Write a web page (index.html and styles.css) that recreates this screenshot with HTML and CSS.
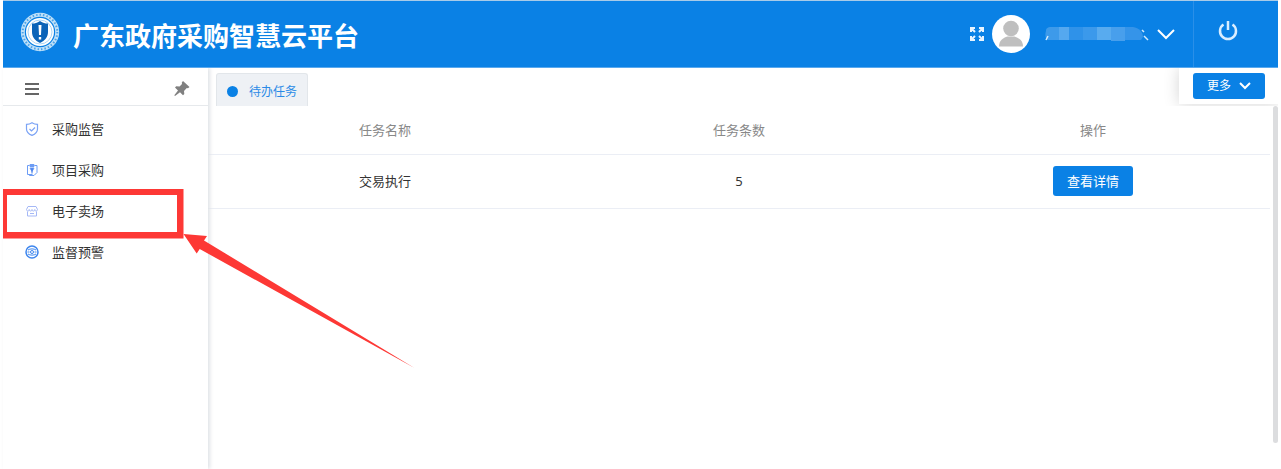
FILE: index.html
```html
<!DOCTYPE html>
<html lang="zh-CN">
<head>
    <meta charset="UTF-8">
    <meta name="viewport" content="width=device-width, initial-scale=1.0">
    <title>广东政府采购智慧云平台</title>
    <link rel="stylesheet" href="styles.css">
</head>
<body>
    <div class="app">
        <header class="header">
            <svg class="logo" viewBox="0 0 40 40">
                <circle cx="20" cy="20" r="17.2" fill="none" stroke="#bfe0f8" stroke-width="4"/>
                <circle cx="20" cy="20" r="17.3" fill="none" stroke="#4ba3e8" stroke-width="2" stroke-dasharray="1.5 2"/>
                <circle cx="20" cy="20" r="14" fill="#fff"/>
                <circle cx="20" cy="20" r="12" fill="none" stroke="#a9d5f5" stroke-width="1"/>
                <path d="M20 9c3 2 5 2.500 8 2.500V20c0 5-3 8.500-8 11-5-2.500-8-6-8-11v-8.500c3 0 5-.5 8-2.500z" fill="#0c64b8"/>
                <path d="M18.500 13h3l-.5 10h-2zM18.800 25h2.400v2.500h-2.400z" fill="#fff"/>
            </svg>
            <h1 class="title">广东政府采购智慧云平台</h1>
            <div class="user">
                <button class="icon-button" aria-label="全屏">
                    <svg width="14" height="14" viewBox="0 0 14 14" fill="none" stroke="#e8f4ff" stroke-width="2">
                        <path d="M1 5V1h4M1 1l4 4M9 1h4v4M13 1L9 5M1 9v4h4M1 13l4-4M13 9v4H9M13 13L9 9"/>
                    </svg>
                </button>
                <svg class="avatar" viewBox="0 0 38 38">
                    <circle cx="19" cy="19" r="19" fill="#fff"/>
                    <circle cx="19" cy="13.500" r="7.800" fill="#bfbfbf"/>
                    <path d="M7 31.500c0-6 4-8.500 8.500-10h7c4.500 1.500 8.500 4 8.500 10z" fill="#bfbfbf"/>
                </svg>
                <button class="account" aria-label="账户">
                    <svg width="106" height="18" viewBox="0 0 106 18">
                        <path d="M2 6c0-3 2-4 5-4h8v13H4c-3-1-3-6-2-9z" fill="#3d9aea"/>
                        <path d="M15 2h10v13H15z" fill="#55a8ef"/>
                        <path d="M25 2h14v13H25z" fill="#2f92e9"/>
                        <path d="M39 2h14v13H39z" fill="#3b99eb"/>
                        <path d="M53 2h14v13H53z" fill="#58abef"/>
                        <path d="M67 2h14v14H67z" fill="#489fec"/>
                        <path d="M81 2h8c6 1 10 5 10 10l-2 3H81z" fill="#3594e9"/>
                        <path d="M2 15l2-4M100 11l4 4M98 5l2 2" stroke="#d5ebfc" fill="none" stroke-width="1.500"/>
                    </svg>
                    <svg width="18" height="12" viewBox="0 0 18 12" fill="none" stroke="#fff" stroke-width="2">
                        <path d="M1 2l8 8 8-8"/>
                    </svg>
                </button>
            </div>
            <button class="power" aria-label="退出">
                <svg width="20" height="20" viewBox="0 0 20 20" fill="none" stroke="#d9edff" stroke-width="2.500">
                    <path d="M5.500 3.500a8 8 0 1 0 9 0M10 0v9"/>
                </svg>
            </button>
        </header>

        <div class="body">
            <aside class="sidebar">
                <div class="sidebar-head">
                    <button class="icon-button" aria-label="菜单">
                        <svg width="14" height="12" viewBox="0 0 14 12" fill="none" stroke="#666" stroke-width="2">
                            <path d="M0 1h14M0 6h14M0 11h14"/>
                        </svg>
                    </button>
                    <button class="icon-button" aria-label="固定">
                        <svg width="16" height="16" viewBox="0 0 16 16" fill="#808080">
                            <path d="M9 0l6.500 6-1.500 1.300-1.200-.2-2.800 2.900.3 3-1.300 1.200-3-3L1 15l-.7-.7L4 9.500 1 6.500l1.200-1.200 3.300.2L8 3l-.2-1.500z"/>
                        </svg>
                    </button>
                </div>
                <nav class="menu">
                    <a class="menu-item" href="#">
                        <svg width="14" height="14" viewBox="0 0 14 14" fill="none" stroke="#7ba3f5" stroke-width="1.200">
                            <path d="M7 .7c2 1.300 3.500 1.600 5.500 1.600V7c0 3-2 5-5.500 6.400C3.500 12 1.500 10 1.500 7V2.300C3.500 2.300 5 2 7 .7z"/>
                            <path d="M4.500 7l2 2 3.500-3.500"/>
                        </svg>
                        采购监管
                    </a>
                    <a class="menu-item" href="#">
                        <svg width="14" height="14" viewBox="0 0 14 14" fill="none" stroke="#6c9cf5">
                            <path d="M4.500 2.500h-2v9h5M9.500 2.500h2.500v7l-3 3H4.500v-1"/>
                            <path d="M5 1.500h4v2H5z" fill="#6c9cf5"/>
                            <path d="M5 5h4L7 8.500z" fill="#3e78ea"/>
                            <path d="M7 7v3.500" stroke="#3e78ea"/>
                        </svg>
                        项目采购
                    </a>
                    <a class="menu-item" href="#">
                        <svg width="14" height="14" viewBox="0 0 14 14" fill="none" stroke="#a5b8f6">
                            <path d="M3 2.500h8l1.500 3c0 2-2.700 2-2.700 0 0 2-2.800 2-2.800 0 0 2-2.800 2-2.800 0 0 2-2.700 2-2.700 0zM2.500 7.500v4.500h9V7.500M5 9.500h4"/>
                        </svg>
                        电子卖场
                    </a>
                    <a class="menu-item" href="#">
                        <svg width="14" height="14" viewBox="0 0 14 14" fill="none" stroke="#3e86ee">
                            <circle cx="7" cy="7" r="6" stroke-width="1.500"/>
                            <path d="M3 5c2-1.500 6-1.500 8 0M3 9c2 1.500 6 1.500 8 0M2.500 7h2M9.500 7h2"/>
                            <circle cx="7" cy="7" r="1.500"/>
                        </svg>
                        监督预警
                    </a>
                </nav>
            </aside>

            <main class="main">
                <div class="tabs">
                    <button class="tab"><span class="dot"></span>待办任务</button>
                    <div class="more">
                        <button class="button more-button">更多
                            <svg width="12" height="8" viewBox="0 0 12 8" fill="none" stroke="#fff" stroke-width="2">
                                <path d="M1 1l5 5 5-5"/>
                            </svg>
                        </button>
                    </div>
                </div>
                <div class="content">
                    <table class="tasks">
                        <thead>
                            <tr>
                                <th>任务名称</th>
                                <th>任务条数</th>
                                <th>操作</th>
                            </tr>
                        </thead>
                        <tbody>
                            <tr>
                                <td>交易执行</td>
                                <td>5</td>
                                <td><button class="button">查看详情</button></td>
                            </tr>
                        </tbody>
                    </table>
                    <div class="scrollbar"></div>
                </div>
            </main>
        </div>

        <!-- step marker over the menu -->
        <svg class="marker" width="420" height="380" viewBox="0 0 420 380" fill="#fd3835">
            <path d="M3 189h180.500v49.500H3zM7 195v37h170v-37z" fill-rule="evenodd"/>
            <path d="M183.500 234l23.500 2-3 4.500L414.500 368 199.700 249l-3 4.500z"/>
        </svg>
    </div>
</body>
</html>
```

FILE: styles.css
```css
* {
    box-sizing: border-box;
}

body {
    margin: 0;
    background-color: #fff;
    color: #333;
    font-family: "Noto Sans", "Noto Sans CJK SC", sans-serif;
    font-size: 13px;
    line-height: 20px;
}

button {
    border: none;
    padding: 0;
    background: none;
    font: inherit;
    cursor: pointer;
}

svg {
    display: block;
    flex: none;
}

.app {
    position: relative;
    display: flex;
    flex-direction: column;
    min-height: 100vh;
    padding: 0 3px;
}

.header {
    position: relative;
    z-index: 1;
    display: flex;
    align-items: center;
    height: 68px;
    padding-left: 17px;
    border-top: 1px solid #a9cbe8;
    border-bottom: 1px solid #5aa9ee;
    background-color: #0a81e5;
    color: #fff;
}

.logo {
    width: 40px;
    height: 40px;
    margin-bottom: 4px;
}

.title {
    margin: 0 auto 0 13px;
    padding-top: 4px;
    font-size: 26px;
    line-height: 40px;
    font-weight: 700;
}

.user {
    display: flex;
    align-items: center;
    padding-right: 18px;
}

.avatar {
    width: 38px;
    height: 38px;
    margin: 0 14px 0 8px;
}

.account {
    display: flex;
    align-items: center;
    gap: 7px;
}

.power {
    display: flex;
    justify-content: center;
    align-items: center;
    align-self: stretch;
    width: 85px;
    padding: 0 16px 6px 0;
    border-left: 1px solid #2a8fe8;
}

.body {
    display: flex;
    flex: 1;
}

.sidebar {
    position: relative;
    flex: none;
    width: 205px;
    box-shadow: 2px 0 4px #dfe2e6;
}

.sidebar-head {
    display: flex;
    justify-content: space-between;
    align-items: center;
    height: 38px;
    padding: 4px 18px 0 22px;
    border-bottom: 1px solid #e6e9ec;
}

.menu {
    padding-top: 2px;
}

.menu-item {
    display: flex;
    align-items: center;
    gap: 13px;
    height: 41px;
    padding-left: 22px;
    color: #333;
    text-decoration: none;
}

.main {
    display: flex;
    flex-direction: column;
    flex: 1;
    min-width: 0;
}

.tabs {
    display: flex;
    justify-content: space-between;
    height: 38px;
    padding-left: 8px;
    overflow: hidden;
}

.tab {
    display: flex;
    align-items: center;
    gap: 11px;
    margin-top: 5px;
    padding: 3px 10px 0;
    border: 1px solid #e2e6ea;
    border-bottom: none;
    border-radius: 3px 3px 0 0;
    background-color: #eef1f5;
    color: #2a8ae6;
    font-size: 12px;
}

.dot {
    width: 11px;
    height: 11px;
    border-radius: 50%;
    background-color: #0a81e5;
}

.more {
    height: 36px;
    padding: 5px 13px 0 14px;
    box-shadow: 0 0 16px #d4d4d4;
}

.button {
    height: 30px;
    padding: 0 14px;
    border-radius: 3px;
    background-color: #0a81e5;
    color: #fff;
}

.more-button {
    display: flex;
    align-items: center;
    gap: 8px;
    height: 26px;
    font-size: 12px;
}

.content {
    display: flex;
    align-items: flex-start;
    flex: 1;
    gap: 3px;
}

.tasks {
    flex: 1;
    table-layout: fixed;
    border-collapse: collapse;
    text-align: center;
}

.tasks th,
.tasks td {
    width: 33%;
    padding: 0;
    border-bottom: 1px solid #ebeef5;
}

.tasks th {
    height: 48px;
    color: #888;
    font-weight: 400;
}

.tasks td {
    height: 54px;
}

.scrollbar {
    align-self: stretch;
    width: 5px;
    margin-bottom: 26px;
    border-radius: 3px;
    background-color: #dcdddf;
}

.marker {
    position: absolute;
    top: 0;
    left: 0;
    pointer-events: none;
}
```
